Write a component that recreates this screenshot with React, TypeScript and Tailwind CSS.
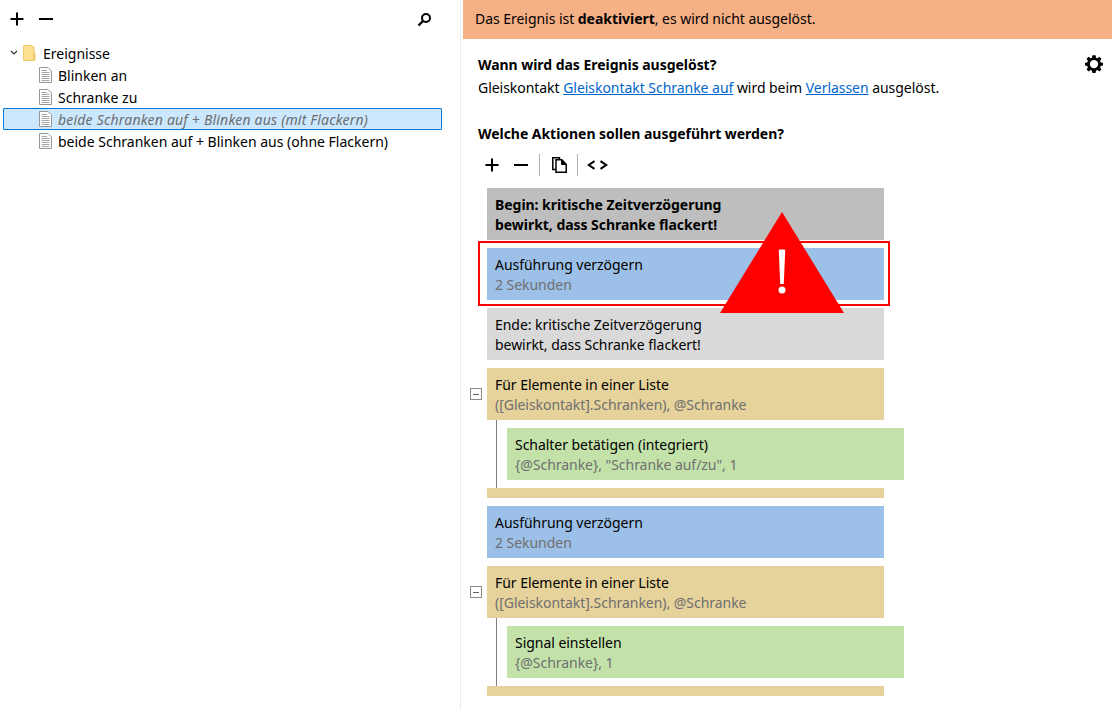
import React from "react";

const Plus = ({ className = "" }: { className?: string }) => (
  <svg width="14" height="14" viewBox="0 0 14 14" className={className}>
    <path d="M7 0.5V13.5M0.5 7H13.5" stroke="#000" strokeWidth="2" />
  </svg>
);
const Minus = ({ className = "" }: { className?: string }) => (
  <svg width="14" height="14" viewBox="0 0 14 14" className={className}>
    <path d="M0 7H14" stroke="#000" strokeWidth="2" />
  </svg>
);
const Doc = () => (
  <svg width="13" height="16" viewBox="0 0 13 16" className="shrink-0">
    <path d="M0.5 0.5H9L12.5 4V15.5H0.5Z" fill="#fff" stroke="#969696" />
    <path d="M2.5 3.5H8M2.5 5.5H10.5M2.5 7.5H10.5M2.5 9.5H10.5M2.5 11.5H10.5M2.5 13.5H10.5" stroke="#a6a6a6" />
  </svg>
);
const Row = ({ label }: { label: string }) => (
  <div className="flex h-[22px] items-center pl-[39px] gap-[6px]">
    <Doc />
    <span>{label}</span>
  </div>
);

type BlockProps = { color: string; title: React.ReactNode; sub: React.ReactNode; subClass?: string };
const Block = ({ color, title, sub, subClass = "text-[#6f6f6f]" }: BlockProps) => (
  <div className={`${color} h-[52px] w-[397px] shrink-0 px-2 pt-[7px] leading-[20px]`}>
    <div>{title}</div>
    <div className={subClass}>{sub}</div>
  </div>
);

const LoopBlock = ({ subtitle, title, sub }: { subtitle: string; title: string; sub: string }) => (
  <div className="flex flex-col">
    <div className="relative">
      <div className="absolute left-[-17px] top-[20px] flex h-3 w-3 items-center justify-center border border-[#8a8a8a] bg-white">
        <div className="h-px w-[6px] bg-[#666]" />
      </div>
      <Block color="bg-[#e6d29b]" title="Für Elemente in einer Liste" sub={subtitle} />
    </div>
    <div className="ml-[9px] border-l border-[#808080] py-2 pl-[10px]">
      <Block color="bg-[#c3e2aa]" title={title} sub={sub} />
    </div>
    <div className="h-[10px] w-[397px] bg-[#e6d29b]" />
  </div>
);

const Gear = () => (
  <svg width="18" height="18" viewBox="0 0 18 18" className="block">
    <path
      fillRule="evenodd"
      d="M7.4 0.2H10.6L11 2.7L12.5 3.3L14.4 1.8L16.4 3.8L15.1 5.9L15.7 7.4L18 7.8V10.6L15.7 11L15.1 12.5L16.4 14.4L14.4 16.4L12.5 15.1L11 15.7L10.6 18H7.4L7 15.7L5.5 15.1L3.6 16.4L1.6 14.4L2.9 12.5L2.3 11L0 10.6V7.8L2.3 7.4L2.9 5.9L1.6 3.8L3.6 1.8L5.5 3.3L7 2.7ZM9 4.9A4.2 4.2 0 1 0 9 13.3A4.2 4.2 0 1 0 9 4.9Z"
      fill="#000"
    />
  </svg>
);

export default function App() {
  return (
    <div
      className="relative flex h-[710px] w-[1112px] overflow-hidden bg-white text-[14px] text-black"
      style={{ fontFamily: '"Noto Sans", "Open Sans", sans-serif' }}
    >
      <aside className="flex w-[461px] shrink-0 flex-col border-r border-[#ececec]">
        <div className="flex h-[42px] items-center px-[10px] pb-[4px]">
          <Plus />
          <Minus className="ml-[15px]" />
          <svg width="15" height="15" viewBox="0 0 15 15" className="ml-auto mr-[18px]">
            <circle cx="9" cy="6" r="4" fill="none" stroke="#000" strokeWidth="2" />
            <path d="M6 9L1.5 13.5" stroke="#000" strokeWidth="2.4" />
          </svg>
        </div>
        <div className="flex h-[22px] items-center pl-[10px]">
          <svg width="10" height="6" viewBox="0 0 10 6" className="mr-[3px]">
            <path d="M1 1L4 4L7 1" fill="none" stroke="#333" strokeWidth="1.2" />
          </svg>
          <svg width="14" height="16" viewBox="0 0 14 16">
            <path d="M0.5 0.5H8L11 2V15.5H0.5Z" fill="#fde08f" stroke="#eccb6c" />
            <path d="M10.5 8V15.5H12.5V8Z" fill="#e9c566" />
          </svg>
          <span className="ml-[6px]">Ereignisse</span>
        </div>
        <Row label="Blinken an" />
        <Row label="Schranke zu" />
        <div className="mx-[3px] -mb-px flex h-[22px] w-[439px] items-center gap-[6px] rounded-[1px] border border-[#0078d7] bg-[#cce8ff] pl-[35px] italic tracking-[0.2px] text-[#6d6d6d]">
          <Doc />
          <span>beide Schranken auf + Blinken aus (mit Flackern)</span>
        </div>
        <div className="h-px" />
        <Row label="beide Schranken auf + Blinken aus (ohne Flackern)" />
      </aside>

      <main className="flex min-w-0 flex-1 flex-col pl-[2px] tracking-[-0.04px]">
        <div className="flex h-[39px] shrink-0 items-center bg-[#f6b086] px-3 pb-[2px]">
          <span>
            Das Ereignis ist <b>deaktiviert</b>, es wird nicht ausgelöst.
          </span>
        </div>
        <div className="relative px-[15px] pt-[16px]">
          <div className="absolute right-[9px] top-[16px]">
            <Gear />
          </div>
          <div className="font-bold leading-[20px]">Wann wird das Ereignis ausgelöst?</div>
          <div className="mt-[3px] leading-[20px]">
            Gleiskontakt <a className="text-[#0066cc] underline">Gleiskontakt Schranke auf</a> wird beim{" "}
            <a className="text-[#0066cc] underline">Verlassen</a> ausgelöst.
          </div>
          <div className="mt-[26px] font-bold leading-[20px]">Welche Aktionen sollen ausgeführt werden?</div>
          <div className="mt-[10px] flex h-[22px] items-center pl-[7px]">
            <Plus />
            <Minus className="ml-[15px]" />
            <div className="ml-[11px] h-[22px] w-px bg-[#b0b0b0]" />
            <svg width="15" height="16" viewBox="0 0 15 16" className="ml-[12px]">
              <path d="M4 12.5H0.8V0.8H7.5V2.5" fill="none" stroke="#000" strokeWidth="1.5" />
              <path d="M4 2.8H9.8L14.2 7.2V15.2H4Z" fill="#fff" stroke="#000" strokeWidth="1.5" />
              <path d="M9.5 3V7.5H14Z" fill="#000" stroke="#000" strokeWidth="1" />
            </svg>
            <div className="ml-[10px] h-[22px] w-px bg-[#b0b0b0]" />
            <svg width="21" height="10" viewBox="0 0 21 10" className="ml-[9px]">
              <path d="M7.5 1.2L1.8 5L7.5 8.8M13.5 1.2L19.2 5L13.5 8.8" fill="none" stroke="#000" strokeWidth="2" />
            </svg>
          </div>
          <div className="relative mt-[12px] ml-[9px] flex w-[417px] flex-col gap-2">
            <Block
              color="bg-[#bebebe]"
              title={<b>Begin: kritische Zeitverzögerung</b>}
              sub={<b>bewirkt, dass Schranke flackert!</b>}
              subClass="text-black"
            />
            <div className="-mb-[6px] -ml-[9px] -mt-[7px] w-[412px] border-2 border-[#ff0000] pb-1 pl-[7px] pt-[5px]">
              <Block color="bg-[#9cc0e7]" title="Ausführung verzögern" sub="2 Sekunden" />
            </div>
            <Block
              color="bg-[#d9d9d9]"
              title="Ende: kritische Zeitverzögerung"
              sub="bewirkt, dass Schranke flackert!"
              subClass="text-black"
            />
            <LoopBlock subtitle="([Gleiskontakt].Schranken), @Schranke" title="Schalter betätigen (integriert)" sub={'{@Schranke}, "Schranke auf/zu", 1'} />
            <Block color="bg-[#9cc0e7]" title="Ausführung verzögern" sub="2 Sekunden" />
            <LoopBlock subtitle="([Gleiskontakt].Schranken), @Schranke" title="Signal einstellen" sub="{@Schranke}, 1" />
          </div>
        </div>
      </main>

      <svg width="124" height="101" viewBox="0 0 124 101" className="absolute left-[720px] top-[212px]">
        <path d="M62 0L124 101H0Z" fill="#ff0000" />
        <path d="M58.8 38.5Q58.8 37.5 59.8 37.5H64.2Q65.2 37.5 65.2 38.5L63.8 72H60.2Z" fill="#fff" />
        <circle cx="62" cy="78" r="3.5" fill="#fff" />
      </svg>
    </div>
  );
}
